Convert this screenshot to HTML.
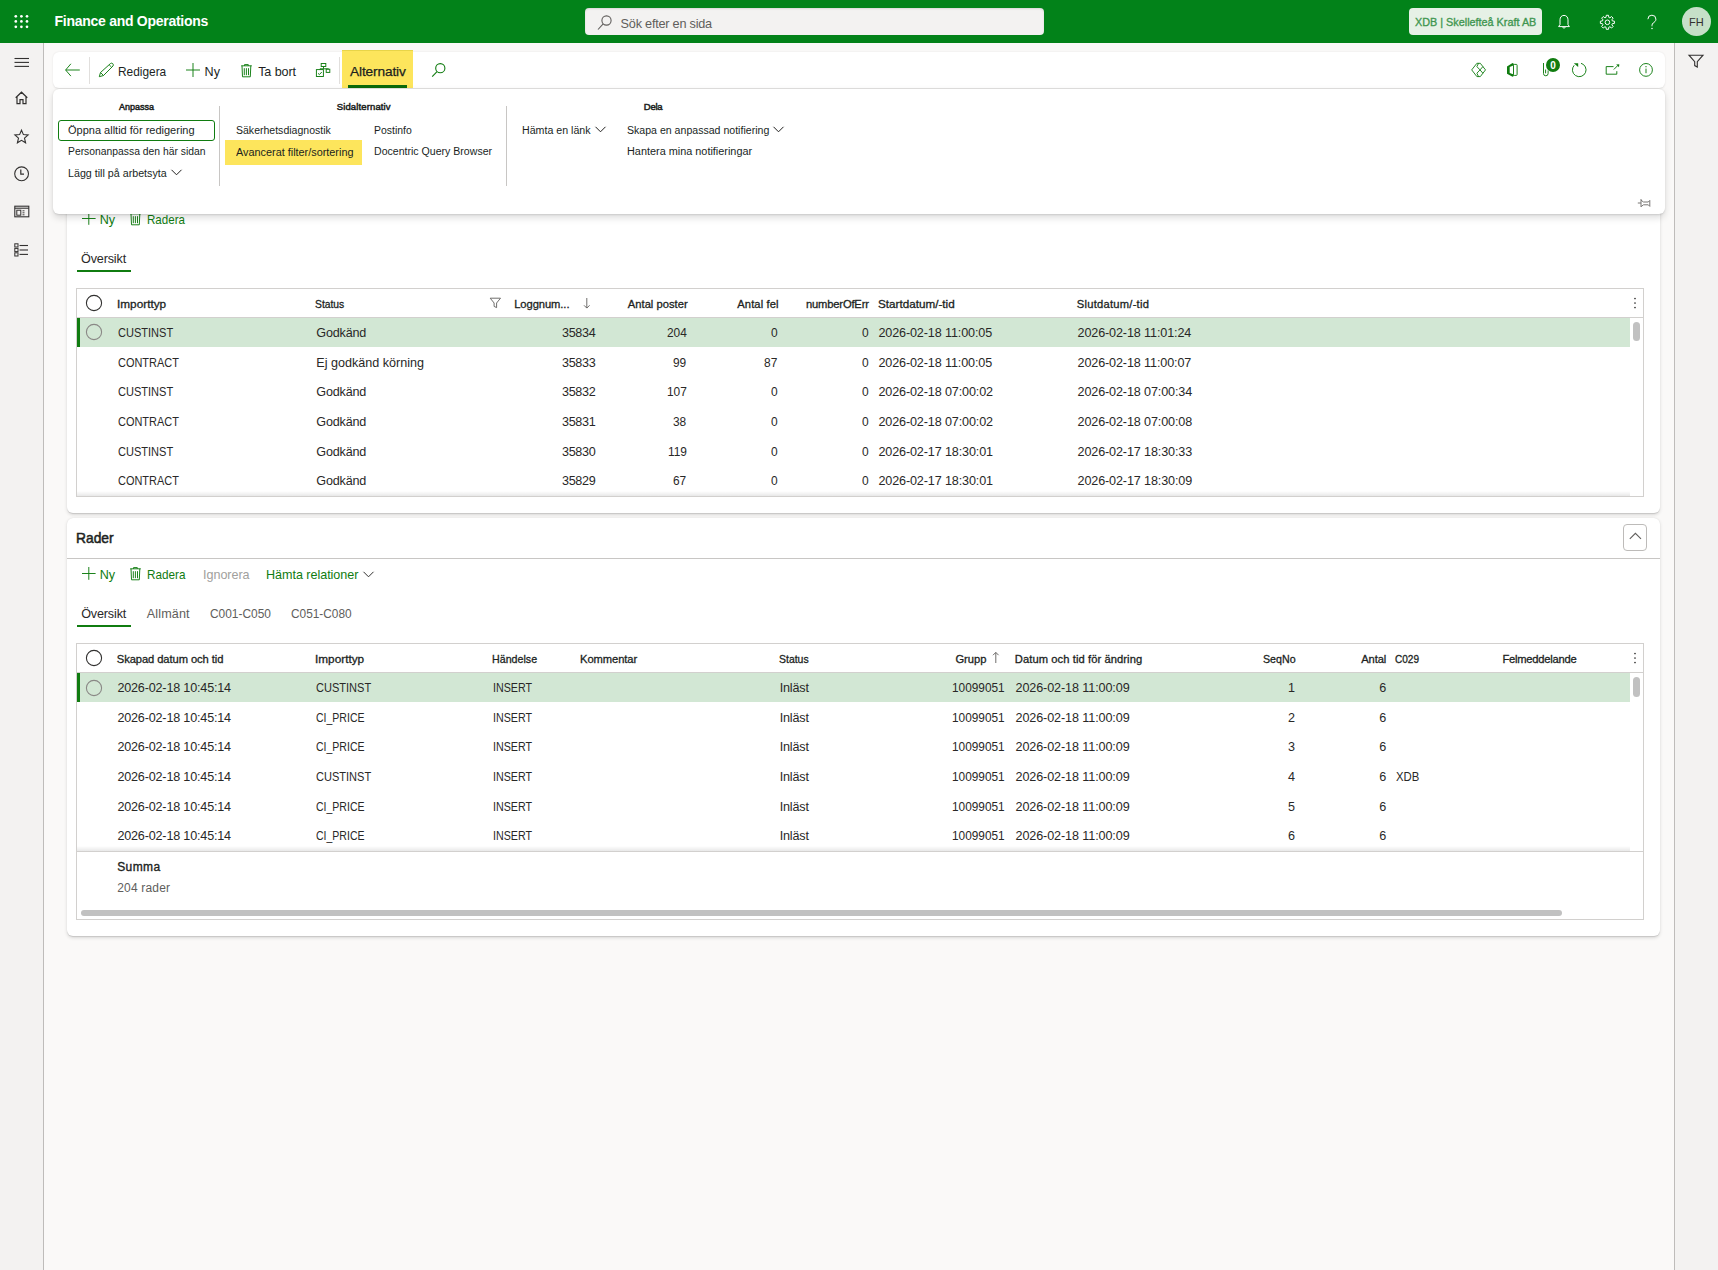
<!DOCTYPE html>
<html><head><meta charset="utf-8"><title>Finance and Operations</title>
<style>
html,body{margin:0;padding:0}
body{width:1718px;height:1270px;overflow:hidden;position:relative;font-family:"Liberation Sans",sans-serif;background:#faf9f8}
.t{position:absolute;white-space:nowrap;line-height:1;transform-origin:0 0}
svg{overflow:visible}
</style></head><body>
<div style="position:absolute;left:0px;top:0px;width:1718px;height:1270px;background:#faf9f8"></div>
<div style="position:absolute;left:0px;top:43px;width:43px;height:1227px;background:#f3f2f1"></div>
<div style="position:absolute;left:43px;top:43px;width:1px;height:1227px;background:#bebcba"></div>
<div style="position:absolute;left:1675px;top:43px;width:43px;height:1227px;background:#f3f2f1"></div>
<div style="position:absolute;left:1674px;top:43px;width:1px;height:1227px;background:#bebcba"></div>
<div style="position:absolute;left:0px;top:0px;width:1718px;height:43px;background:#028219"></div>
<svg style="position:absolute;left:0px;top:0px;" width="43" height="43" viewBox="0 0 43 43"><circle cx="15.8" cy="16.3" r="1.35" fill="#fff"/><circle cx="15.8" cy="21.4" r="1.35" fill="#fff"/><circle cx="15.8" cy="26.8" r="1.35" fill="#fff"/><circle cx="21.4" cy="16.3" r="1.35" fill="#fff"/><circle cx="21.4" cy="21.4" r="1.35" fill="#fff"/><circle cx="21.4" cy="26.8" r="1.35" fill="#fff"/><circle cx="27.0" cy="16.3" r="1.35" fill="#fff"/><circle cx="27.0" cy="21.4" r="1.35" fill="#fff"/><circle cx="27.0" cy="26.8" r="1.35" fill="#fff"/></svg>
<div class="t" style="left:54.60px;top:14px;font-size:14px;color:#ffffff;font-weight:700;letter-spacing:-0.279px;">Finance and Operations</div>
<div style="position:absolute;left:585px;top:8px;width:459px;height:26.5px;background:#f3f2f1;border-radius:4px;box-shadow:inset 0 1px 2px rgba(0,0,0,.12)"></div>
<svg style="position:absolute;left:596px;top:14px;" width="18" height="18" viewBox="0 0 18 18"><circle cx="10.5" cy="6.5" r="4.6" fill="none" stroke="#605e5c" stroke-width="1.1"/><line x1="7.2" y1="9.8" x2="2" y2="15.5" stroke="#605e5c" stroke-width="1.1"/></svg>
<div class="t" style="left:620.60px;top:18px;font-size:12.7px;color:#605e5c;letter-spacing:-0.228px;">Sök efter en sida</div>
<div style="position:absolute;left:1409px;top:8px;width:133px;height:26.7px;background:#e6f1e6;border-radius:4px"></div>
<div class="t" style="left:1414.80px;top:16px;font-size:11.6px;color:#3f9650;-webkit-text-stroke:0.35px #3f9650;transform:scaleX(0.9335);">XDB | Skellefteå Kraft AB</div>
<svg style="position:absolute;left:1600px;top:14.5px;" width="15" height="15" viewBox="0 0 15 15"><g transform="translate(7.4,7.3)" fill="none" stroke="#fff" stroke-width="1" stroke-linejoin="round"><polygon points="-1.41,-4.90 -1.11,-7.01 1.11,-7.01 1.41,-4.90 2.47,-4.46 4.17,-5.74 5.74,-4.17 4.46,-2.47 4.90,-1.41 7.01,-1.11 7.01,1.11 4.90,1.41 4.46,2.47 5.74,4.17 4.17,5.74 2.47,4.46 1.41,4.90 1.11,7.01 -1.11,7.01 -1.41,4.90 -2.47,4.46 -4.17,5.74 -5.74,4.17 -4.46,2.47 -4.90,1.41 -7.01,1.11 -7.01,-1.11 -4.90,-1.41 -4.46,-2.47 -5.74,-4.17 -4.17,-5.74 -2.47,-4.46"/><circle r="2.3"/></g></svg>
<svg style="position:absolute;left:1556.5px;top:14px;" width="14" height="16" viewBox="0 0 14 16"><path d="M7 1.4c-2.5 0-4 1.9-4 4.4v4.8L1.6 12.6h10.8L11 10.6V5.8C11 3.3 9.5 1.4 7 1.4z" fill="none" stroke="#fff" stroke-width="1" stroke-linejoin="round"/><path d="M5.6 13.1a1.5 1.5 0 0 0 2.8 0" fill="none" stroke="#fff" stroke-width="1"/></svg>
<svg style="position:absolute;left:1646px;top:14.5px;" width="12" height="16" viewBox="0 0 12 16"><path d="M1.9 4.2a4 4 0 0 1 8 0c0 2.1-1.5 2.8-2.7 3.8-.8.6-1.2 1.3-1.2 2.4v.9" fill="none" stroke="#fff" stroke-width="1"/><circle cx="6" cy="13.6" r="0.75" fill="#fff"/></svg>
<div style="position:absolute;left:1682px;top:7px;width:29px;height:29px;background:#c6e0c8;border-radius:50%"></div>
<div class="t" style="left:1689.00px;top:17px;font-size:11.8px;color:#323130;transform:scaleX(0.9333);">FH</div>
<svg style="position:absolute;left:14px;top:57px;" width="16" height="11" viewBox="0 0 16 11"><g stroke="#323130" stroke-width="1.1"><line x1="0.5" y1="1.5" x2="15" y2="1.5"/><line x1="0.5" y1="5.4" x2="15" y2="5.4"/><line x1="0.5" y1="9.4" x2="15" y2="9.4"/></g></svg>
<svg style="position:absolute;left:14px;top:91px;" width="15" height="14" viewBox="0 0 15 14"><path d="M1.7 6.8L7.5 1.2l5.8 5.6M3 5.7v7h3v-4h3v4h3v-7" fill="none" stroke="#323130" stroke-width="1.2" stroke-linejoin="miter"/></svg>
<svg style="position:absolute;left:14px;top:128.5px;" width="16" height="16" viewBox="0 0 16 16"><path d="M7.5 1.2l1.9 4.4 4.7.4-3.6 3.1 1.1 4.7-4.1-2.5-4.1 2.5 1.1-4.7L.9 6l4.7-.4z" fill="none" stroke="#323130" stroke-width="1.1" stroke-linejoin="miter"/></svg>
<svg style="position:absolute;left:13px;top:165px;" width="18" height="18" viewBox="0 0 18 18"><circle cx="8.6" cy="8.8" r="6.9" fill="none" stroke="#323130" stroke-width="1.1"/><path d="M7.8 4.6v4.6h3.2" fill="none" stroke="#323130" stroke-width="1.2"/></svg>
<svg style="position:absolute;left:13px;top:205px;" width="18" height="14" viewBox="0 0 18 14"><rect x="1.8" y="1.2" width="14" height="10.6" fill="none" stroke="#323130" stroke-width="1.1"/><line x1="1.8" y1="3.2" x2="15.8" y2="3.2" stroke="#323130" stroke-width="1.1"/><rect x="3.8" y="5.2" width="4" height="5" fill="none" stroke="#323130" stroke-width="1"/><g stroke="#323130" stroke-width="0.9"><line x1="9.5" y1="5.8" x2="11.5" y2="5.8"/><line x1="9.5" y1="7.8" x2="11.5" y2="7.8"/><line x1="9.5" y1="9.8" x2="11.5" y2="9.8"/></g></svg>
<svg style="position:absolute;left:13px;top:242px;" width="18" height="16" viewBox="0 0 18 16"><g fill="none" stroke="#323130" stroke-width="1"><rect x="1.8" y="1.8" width="3.2" height="3.2"/><rect x="1.8" y="6.4" width="3.2" height="3.2"/><rect x="1.8" y="10.8" width="3.2" height="3.2"/></g><g stroke="#323130" stroke-width="1.1"><line x1="6.5" y1="3.5" x2="15" y2="3.5"/><line x1="6.5" y1="8" x2="15" y2="8"/><line x1="6.5" y1="12.4" x2="15" y2="12.4"/></g></svg>
<svg style="position:absolute;left:1688px;top:54px;" width="16" height="14" viewBox="0 0 16 14"><path d="M1 1.2h14L9.3 7.6v5.4L6.7 11.6V7.6z" fill="none" stroke="#323130" stroke-width="1.1" stroke-linejoin="miter"/></svg>
<div style="position:absolute;left:67px;top:190px;width:1593px;height:323px;background:#fff;border-radius:6px;box-shadow:0 1.6px 3.6px rgba(0,0,0,.13),0 0.3px 0.9px rgba(0,0,0,.11)"></div>
<div style="position:absolute;left:67px;top:518px;width:1593px;height:418px;background:#fff;border-radius:6px;box-shadow:0 1.6px 3.6px rgba(0,0,0,.13),0 0.3px 0.9px rgba(0,0,0,.11)"></div>
<svg style="position:absolute;left:82px;top:211.9px;" width="15" height="15" viewBox="0 0 15 15"><g stroke="#107c10" stroke-width="0.95"><line x1="6.8" y1="0" x2="6.8" y2="12.8"/><line x1="0" y1="6.5" x2="13.6" y2="6.5"/></g></svg>
<div class="t" style="left:99.80px;top:214px;font-size:12.6px;color:#107c10;letter-spacing:-0.200px;">Ny</div>
<svg style="position:absolute;left:130px;top:212.1px;" width="12" height="14" viewBox="0 0 12 14"><g fill="none" stroke="#107c10" stroke-width="0.95"><path d="M0.2 1.8h10.6M3.5 1.8V0.6h3.8v1.2M1 1.8l0.5 11h7.8l0.5-11"/><path d="M3.3 4.2v7M5.4 4.2v7M7.5 4.2v7"/></g></svg>
<div class="t" style="left:147.00px;top:214px;font-size:12.6px;color:#107c10;transform:scaleX(0.9190);">Radera</div>
<div class="t" style="left:81.00px;top:253px;font-size:12.6px;color:#292827;letter-spacing:-0.143px;">Översikt</div>
<div style="position:absolute;left:77px;top:270px;width:54px;height:2px;background:#107c10"></div>
<div style="position:absolute;left:76px;top:288px;width:1568px;height:209px;border:1px solid #d2d0ce;box-sizing:border-box"></div>
<div style="position:absolute;left:77px;top:317px;width:1566px;height:1px;background:#d2d0ce"></div>
<div style="position:absolute;left:77px;top:318px;width:1553px;height:29px;background:#d2e7d4"></div>
<div style="position:absolute;left:77px;top:318px;width:3px;height:29px;background:#107c10"></div>
<div style="position:absolute;left:1633px;top:322px;width:7px;height:18.5px;background:#c1c1c1;border-radius:4px"></div>
<div style="position:absolute;left:77px;top:491px;width:1553px;height:5px;background:linear-gradient(rgba(0,0,0,0),rgba(0,0,0,.09))"></div>
<svg style="position:absolute;left:85px;top:294px;" width="18" height="18" viewBox="0 0 18 18"><circle cx="9" cy="9" r="7.6" fill="none" stroke="#323130" stroke-width="1.1"/></svg>
<div class="t" style="left:116.90px;top:299px;font-size:11.2px;color:#201f1e;-webkit-text-stroke:0.3px #201f1e;transform:scaleX(1.0535);">Importtyp</div>
<div class="t" style="left:315.40px;top:299px;font-size:11.2px;color:#201f1e;-webkit-text-stroke:0.3px #201f1e;transform:scaleX(0.9228);">Status</div>
<svg style="position:absolute;left:489px;top:297px;" width="13" height="12" viewBox="0 0 13 12"><path d="M1.2 1.2h10.3L7.6 6v4.6L5.1 9.4V6z" fill="none" stroke="#605e5c" stroke-width="0.9"/></svg>
<div class="t" style="left:514.20px;top:299px;font-size:11.2px;color:#201f1e;-webkit-text-stroke:0.3px #201f1e;letter-spacing:-0.072px;">Loggnum...</div>
<svg style="position:absolute;left:583px;top:297px;" width="8" height="13" viewBox="0 0 8 13"><g fill="none" stroke="#605e5c" stroke-width="0.9"><line x1="3.8" y1="1" x2="3.8" y2="11"/><path d="M1 8.3l2.8 2.8 2.8-2.8"/></g></svg>
<div class="t" style="left:627.80px;top:299px;font-size:11.2px;color:#201f1e;-webkit-text-stroke:0.3px #201f1e;letter-spacing:0.014px;">Antal poster</div>
<div class="t" style="left:737.30px;top:299px;font-size:11.2px;color:#201f1e;-webkit-text-stroke:0.3px #201f1e;letter-spacing:0.094px;">Antal fel</div>
<div class="t" style="left:806.00px;top:299px;font-size:11.2px;color:#201f1e;-webkit-text-stroke:0.3px #201f1e;letter-spacing:-0.175px;">numberOfErr</div>
<div class="t" style="left:877.70px;top:299px;font-size:11.2px;color:#201f1e;-webkit-text-stroke:0.3px #201f1e;transform:scaleX(1.0456);">Startdatum/-tid</div>
<div class="t" style="left:1076.80px;top:299px;font-size:11.2px;color:#201f1e;-webkit-text-stroke:0.3px #201f1e;letter-spacing:0.238px;">Slutdatum/-tid</div>
<svg style="position:absolute;left:1632px;top:295px;" width="6" height="16" viewBox="0 0 6 16"><g fill="#323130"><circle cx="3" cy="3.5" r="0.85"/><circle cx="3" cy="8" r="0.85"/><circle cx="3" cy="12.5" r="0.85"/></g></svg>
<svg style="position:absolute;left:85px;top:323.4px;" width="18" height="18" viewBox="0 0 18 18"><circle cx="9" cy="9" r="7.6" fill="none" stroke="#8a8886" stroke-width="1.1"/></svg>
<div class="t" style="left:117.70px;top:327px;font-size:12.6px;color:#292827;transform:scaleX(0.8760);">CUSTINST</div>
<div class="t" style="left:316.30px;top:327px;font-size:12.6px;color:#292827;letter-spacing:-0.175px;">Godkänd</div>
<div class="t" style="left:562.02px;top:327px;font-size:12.6px;color:#292827;letter-spacing:-0.342px;">35834</div>
<div class="t" style="left:666.65px;top:327px;font-size:12.6px;color:#292827;transform:scaleX(0.9450);">204</div>
<div class="t" style="left:770.75px;top:327px;font-size:12.6px;color:#292827;transform:scaleX(0.9500);">0</div>
<div class="t" style="left:861.55px;top:327px;font-size:12.6px;color:#292827;transform:scaleX(0.9500);">0</div>
<div class="t" style="left:878.40px;top:327px;font-size:12.6px;color:#292827;letter-spacing:-0.122px;">2026-02-18 11:00:05</div>
<div class="t" style="left:1077.50px;top:327px;font-size:12.6px;color:#292827;letter-spacing:-0.122px;">2026-02-18 11:01:24</div>
<div class="t" style="left:117.70px;top:357px;font-size:12.6px;color:#292827;transform:scaleX(0.8700);">CONTRACT</div>
<div class="t" style="left:316.30px;top:357px;font-size:12.6px;color:#292827;letter-spacing:-0.006px;">Ej godkänd körning</div>
<div class="t" style="left:562.02px;top:357px;font-size:12.6px;color:#292827;letter-spacing:-0.342px;">35833</div>
<div class="t" style="left:673.27px;top:357px;font-size:12.6px;color:#292827;transform:scaleX(0.9450);">99</div>
<div class="t" style="left:764.10px;top:357px;font-size:12.6px;color:#292827;transform:scaleX(0.9500);">87</div>
<div class="t" style="left:861.55px;top:357px;font-size:12.6px;color:#292827;transform:scaleX(0.9500);">0</div>
<div class="t" style="left:878.40px;top:357px;font-size:12.6px;color:#292827;letter-spacing:-0.122px;">2026-02-18 11:00:05</div>
<div class="t" style="left:1077.50px;top:357px;font-size:12.6px;color:#292827;letter-spacing:-0.122px;">2026-02-18 11:00:07</div>
<div class="t" style="left:117.70px;top:386px;font-size:12.6px;color:#292827;transform:scaleX(0.8760);">CUSTINST</div>
<div class="t" style="left:316.30px;top:386px;font-size:12.6px;color:#292827;letter-spacing:-0.175px;">Godkänd</div>
<div class="t" style="left:562.02px;top:386px;font-size:12.6px;color:#292827;letter-spacing:-0.342px;">35832</div>
<div class="t" style="left:666.65px;top:386px;font-size:12.6px;color:#292827;transform:scaleX(0.9450);">107</div>
<div class="t" style="left:770.75px;top:386px;font-size:12.6px;color:#292827;transform:scaleX(0.9500);">0</div>
<div class="t" style="left:861.55px;top:386px;font-size:12.6px;color:#292827;transform:scaleX(0.9500);">0</div>
<div class="t" style="left:878.40px;top:386px;font-size:12.6px;color:#292827;letter-spacing:-0.123px;">2026-02-18 07:00:02</div>
<div class="t" style="left:1077.50px;top:386px;font-size:12.6px;color:#292827;letter-spacing:-0.123px;">2026-02-18 07:00:34</div>
<div class="t" style="left:117.70px;top:416px;font-size:12.6px;color:#292827;transform:scaleX(0.8700);">CONTRACT</div>
<div class="t" style="left:316.30px;top:416px;font-size:12.6px;color:#292827;letter-spacing:-0.175px;">Godkänd</div>
<div class="t" style="left:562.02px;top:416px;font-size:12.6px;color:#292827;letter-spacing:-0.342px;">35831</div>
<div class="t" style="left:673.27px;top:416px;font-size:12.6px;color:#292827;transform:scaleX(0.9450);">38</div>
<div class="t" style="left:770.75px;top:416px;font-size:12.6px;color:#292827;transform:scaleX(0.9500);">0</div>
<div class="t" style="left:861.55px;top:416px;font-size:12.6px;color:#292827;transform:scaleX(0.9500);">0</div>
<div class="t" style="left:878.40px;top:416px;font-size:12.6px;color:#292827;letter-spacing:-0.123px;">2026-02-18 07:00:02</div>
<div class="t" style="left:1077.50px;top:416px;font-size:12.6px;color:#292827;letter-spacing:-0.123px;">2026-02-18 07:00:08</div>
<div class="t" style="left:117.70px;top:446px;font-size:12.6px;color:#292827;transform:scaleX(0.8760);">CUSTINST</div>
<div class="t" style="left:316.30px;top:446px;font-size:12.6px;color:#292827;letter-spacing:-0.175px;">Godkänd</div>
<div class="t" style="left:562.02px;top:446px;font-size:12.6px;color:#292827;letter-spacing:-0.342px;">35830</div>
<div class="t" style="left:667.51px;top:446px;font-size:12.6px;color:#292827;transform:scaleX(0.9450);">119</div>
<div class="t" style="left:770.75px;top:446px;font-size:12.6px;color:#292827;transform:scaleX(0.9500);">0</div>
<div class="t" style="left:861.55px;top:446px;font-size:12.6px;color:#292827;transform:scaleX(0.9500);">0</div>
<div class="t" style="left:878.40px;top:446px;font-size:12.6px;color:#292827;letter-spacing:-0.123px;">2026-02-17 18:30:01</div>
<div class="t" style="left:1077.50px;top:446px;font-size:12.6px;color:#292827;letter-spacing:-0.123px;">2026-02-17 18:30:33</div>
<div class="t" style="left:117.70px;top:475px;font-size:12.6px;color:#292827;transform:scaleX(0.8700);">CONTRACT</div>
<div class="t" style="left:316.30px;top:475px;font-size:12.6px;color:#292827;letter-spacing:-0.175px;">Godkänd</div>
<div class="t" style="left:562.02px;top:475px;font-size:12.6px;color:#292827;letter-spacing:-0.342px;">35829</div>
<div class="t" style="left:673.27px;top:475px;font-size:12.6px;color:#292827;transform:scaleX(0.9450);">67</div>
<div class="t" style="left:770.75px;top:475px;font-size:12.6px;color:#292827;transform:scaleX(0.9500);">0</div>
<div class="t" style="left:861.55px;top:475px;font-size:12.6px;color:#292827;transform:scaleX(0.9500);">0</div>
<div class="t" style="left:878.40px;top:475px;font-size:12.6px;color:#292827;letter-spacing:-0.123px;">2026-02-17 18:30:01</div>
<div class="t" style="left:1077.50px;top:475px;font-size:12.6px;color:#292827;letter-spacing:-0.123px;">2026-02-17 18:30:09</div>
<div class="t" style="left:76.00px;top:531px;font-size:14.5px;color:#201f1e;-webkit-text-stroke:0.5px #201f1e;transform:scaleX(0.9519);">Rader</div>
<div style="position:absolute;left:1623.3px;top:524.2px;width:23.6px;height:26.5px;border:1px solid #bdbbb9;border-radius:4px;box-sizing:border-box"></div>
<svg style="position:absolute;left:1628px;top:531px;" width="15" height="10" viewBox="0 0 15 10"><path d="M1.8 7.8l5.6-5.5 5.6 5.5" fill="none" stroke="#605e5c" stroke-width="1.1"/></svg>
<div style="position:absolute;left:67px;top:558px;width:1593px;height:1px;background:#c8c6c4"></div>
<svg style="position:absolute;left:82px;top:567px;" width="15" height="15" viewBox="0 0 15 15"><g stroke="#107c10" stroke-width="0.95"><line x1="6.8" y1="0" x2="6.8" y2="12.8"/><line x1="0" y1="6.5" x2="13.6" y2="6.5"/></g></svg>
<div class="t" style="left:99.80px;top:569px;font-size:12.6px;color:#107c10;letter-spacing:-0.200px;">Ny</div>
<svg style="position:absolute;left:130px;top:566.6px;" width="12" height="14" viewBox="0 0 12 14"><g fill="none" stroke="#107c10" stroke-width="0.95"><path d="M0.2 1.8h10.6M3.5 1.8V0.6h3.8v1.2M1 1.8l0.5 11h7.8l0.5-11"/><path d="M3.3 4.2v7M5.4 4.2v7M7.5 4.2v7"/></g></svg>
<div class="t" style="left:146.50px;top:569px;font-size:12.6px;color:#107c10;transform:scaleX(0.9311);">Radera</div>
<div class="t" style="left:203.10px;top:569px;font-size:12.6px;color:#a19f9d;letter-spacing:-0.064px;">Ignorera</div>
<div class="t" style="left:266.00px;top:569px;font-size:12.6px;color:#107c10;letter-spacing:-0.043px;">Hämta relationer</div>
<svg style="position:absolute;left:362px;top:569.5px;" width="14" height="9" viewBox="0 0 14 9"><path d="M1.5 1.8l5 5 5-5" fill="none" stroke="#323130" stroke-width="1"/></svg>
<div class="t" style="left:81.20px;top:608px;font-size:12.6px;color:#292827;letter-spacing:-0.157px;">Översikt</div>
<div class="t" style="left:146.70px;top:608px;font-size:12.6px;color:#605e5c;letter-spacing:0.150px;">Allmänt</div>
<div class="t" style="left:209.80px;top:608px;font-size:12.6px;color:#605e5c;transform:scaleX(0.9465);">C001-C050</div>
<div class="t" style="left:291.20px;top:608px;font-size:12.6px;color:#605e5c;transform:scaleX(0.9418);">C051-C080</div>
<div style="position:absolute;left:77px;top:625px;width:54px;height:2px;background:#107c10"></div>
<div style="position:absolute;left:76px;top:643px;width:1568px;height:277px;border:1px solid #d2d0ce;box-sizing:border-box"></div>
<div style="position:absolute;left:77px;top:672px;width:1566px;height:1px;background:#d2d0ce"></div>
<div style="position:absolute;left:77px;top:673px;width:1553px;height:29px;background:#d2e7d4"></div>
<div style="position:absolute;left:77px;top:673px;width:3px;height:29px;background:#107c10"></div>
<div style="position:absolute;left:1633px;top:677px;width:7px;height:19.5px;background:#c1c1c1;border-radius:4px"></div>
<div style="position:absolute;left:77px;top:846px;width:1553px;height:5px;background:linear-gradient(rgba(0,0,0,0),rgba(0,0,0,.09))"></div>
<div style="position:absolute;left:77px;top:851px;width:1566px;height:1px;background:#d2d0ce"></div>
<div style="position:absolute;left:80.7px;top:910px;width:1481px;height:6px;background:#c1c1c1;border-radius:3px"></div>
<svg style="position:absolute;left:84.6px;top:649px;" width="18" height="18" viewBox="0 0 18 18"><circle cx="9" cy="9" r="7.6" fill="none" stroke="#323130" stroke-width="1.1"/></svg>
<div class="t" style="left:116.80px;top:654px;font-size:11.2px;color:#201f1e;-webkit-text-stroke:0.3px #201f1e;letter-spacing:-0.087px;">Skapad datum och tid</div>
<div class="t" style="left:315.20px;top:654px;font-size:11.2px;color:#201f1e;-webkit-text-stroke:0.3px #201f1e;transform:scaleX(1.0535);">Importtyp</div>
<div class="t" style="left:491.60px;top:654px;font-size:11.2px;color:#201f1e;-webkit-text-stroke:0.3px #201f1e;transform:scaleX(0.9535);">Händelse</div>
<div class="t" style="left:580.00px;top:654px;font-size:11.2px;color:#201f1e;-webkit-text-stroke:0.3px #201f1e;letter-spacing:-0.075px;">Kommentar</div>
<div class="t" style="left:778.70px;top:654px;font-size:11.2px;color:#201f1e;-webkit-text-stroke:0.3px #201f1e;transform:scaleX(0.9354);">Status</div>
<div class="t" style="left:955.40px;top:654px;font-size:11.2px;color:#201f1e;-webkit-text-stroke:0.3px #201f1e;letter-spacing:-0.012px;">Grupp</div>
<svg style="position:absolute;left:992px;top:651px;" width="8" height="13" viewBox="0 0 8 13"><g fill="none" stroke="#605e5c" stroke-width="0.9"><line x1="3.8" y1="1.5" x2="3.8" y2="12"/><path d="M1 4.2l2.8-2.8 2.8 2.8"/></g></svg>
<div class="t" style="left:1014.80px;top:654px;font-size:11.2px;color:#201f1e;-webkit-text-stroke:0.3px #201f1e;letter-spacing:0.073px;">Datum och tid för ändring</div>
<div class="t" style="left:1263.30px;top:654px;font-size:11.2px;color:#201f1e;-webkit-text-stroke:0.3px #201f1e;transform:scaleX(0.9518);">SeqNo</div>
<div class="t" style="left:1361.30px;top:654px;font-size:11.2px;color:#201f1e;-webkit-text-stroke:0.3px #201f1e;letter-spacing:-0.138px;">Antal</div>
<div class="t" style="left:1395.40px;top:654px;font-size:11.2px;color:#201f1e;-webkit-text-stroke:0.3px #201f1e;transform:scaleX(0.8993);">C029</div>
<div class="t" style="left:1502.40px;top:654px;font-size:11.2px;color:#201f1e;-webkit-text-stroke:0.3px #201f1e;letter-spacing:-0.233px;">Felmeddelande</div>
<svg style="position:absolute;left:1632px;top:650px;" width="6" height="16" viewBox="0 0 6 16"><g fill="#323130"><circle cx="3" cy="3.5" r="0.85"/><circle cx="3" cy="8" r="0.85"/><circle cx="3" cy="12.5" r="0.85"/></g></svg>
<svg style="position:absolute;left:84.6px;top:678.6px;" width="18" height="18" viewBox="0 0 18 18"><circle cx="9" cy="9" r="7.6" fill="none" stroke="#8a8886" stroke-width="1.1"/></svg>
<div class="t" style="left:117.40px;top:682px;font-size:12.6px;color:#292827;letter-spacing:-0.178px;">2026-02-18 10:45:14</div>
<div class="t" style="left:316.00px;top:682px;font-size:12.6px;color:#292827;transform:scaleX(0.8762);">CUSTINST</div>
<div class="t" style="left:492.70px;top:682px;font-size:12.6px;color:#292827;transform:scaleX(0.8500);">INSERT</div>
<div class="t" style="left:779.70px;top:682px;font-size:12.6px;color:#292827;letter-spacing:-0.160px;">Inläst</div>
<div class="t" style="left:951.60px;top:682px;font-size:12.6px;color:#292827;transform:scaleX(0.9402);">10099051</div>
<div class="t" style="left:1015.50px;top:682px;font-size:12.6px;color:#292827;letter-spacing:-0.103px;">2026-02-18 11:00:09</div>
<div class="t" style="left:1288.00px;top:682px;font-size:12.6px;color:#292827;">1</div>
<div class="t" style="left:1379.30px;top:682px;font-size:12.6px;color:#292827;">6</div>
<div class="t" style="left:117.40px;top:712px;font-size:12.6px;color:#292827;letter-spacing:-0.178px;">2026-02-18 10:45:14</div>
<div class="t" style="left:316.00px;top:712px;font-size:12.6px;color:#292827;transform:scaleX(0.8348);">CI_PRICE</div>
<div class="t" style="left:492.70px;top:712px;font-size:12.6px;color:#292827;transform:scaleX(0.8500);">INSERT</div>
<div class="t" style="left:779.70px;top:712px;font-size:12.6px;color:#292827;letter-spacing:-0.160px;">Inläst</div>
<div class="t" style="left:951.60px;top:712px;font-size:12.6px;color:#292827;transform:scaleX(0.9402);">10099051</div>
<div class="t" style="left:1015.50px;top:712px;font-size:12.6px;color:#292827;letter-spacing:-0.103px;">2026-02-18 11:00:09</div>
<div class="t" style="left:1288.00px;top:712px;font-size:12.6px;color:#292827;">2</div>
<div class="t" style="left:1379.30px;top:712px;font-size:12.6px;color:#292827;">6</div>
<div class="t" style="left:117.40px;top:741px;font-size:12.6px;color:#292827;letter-spacing:-0.178px;">2026-02-18 10:45:14</div>
<div class="t" style="left:316.00px;top:741px;font-size:12.6px;color:#292827;transform:scaleX(0.8348);">CI_PRICE</div>
<div class="t" style="left:492.70px;top:741px;font-size:12.6px;color:#292827;transform:scaleX(0.8500);">INSERT</div>
<div class="t" style="left:779.70px;top:741px;font-size:12.6px;color:#292827;letter-spacing:-0.160px;">Inläst</div>
<div class="t" style="left:951.60px;top:741px;font-size:12.6px;color:#292827;transform:scaleX(0.9402);">10099051</div>
<div class="t" style="left:1015.50px;top:741px;font-size:12.6px;color:#292827;letter-spacing:-0.103px;">2026-02-18 11:00:09</div>
<div class="t" style="left:1288.00px;top:741px;font-size:12.6px;color:#292827;">3</div>
<div class="t" style="left:1379.30px;top:741px;font-size:12.6px;color:#292827;">6</div>
<div class="t" style="left:117.40px;top:771px;font-size:12.6px;color:#292827;letter-spacing:-0.178px;">2026-02-18 10:45:14</div>
<div class="t" style="left:316.00px;top:771px;font-size:12.6px;color:#292827;transform:scaleX(0.8762);">CUSTINST</div>
<div class="t" style="left:492.70px;top:771px;font-size:12.6px;color:#292827;transform:scaleX(0.8500);">INSERT</div>
<div class="t" style="left:779.70px;top:771px;font-size:12.6px;color:#292827;letter-spacing:-0.160px;">Inläst</div>
<div class="t" style="left:951.60px;top:771px;font-size:12.6px;color:#292827;transform:scaleX(0.9402);">10099051</div>
<div class="t" style="left:1015.50px;top:771px;font-size:12.6px;color:#292827;letter-spacing:-0.103px;">2026-02-18 11:00:09</div>
<div class="t" style="left:1288.00px;top:771px;font-size:12.6px;color:#292827;">4</div>
<div class="t" style="left:1379.30px;top:771px;font-size:12.6px;color:#292827;">6</div>
<div class="t" style="left:1396.00px;top:771px;font-size:12.6px;color:#292827;transform:scaleX(0.9000);">XDB</div>
<div class="t" style="left:117.40px;top:801px;font-size:12.6px;color:#292827;letter-spacing:-0.178px;">2026-02-18 10:45:14</div>
<div class="t" style="left:316.00px;top:801px;font-size:12.6px;color:#292827;transform:scaleX(0.8348);">CI_PRICE</div>
<div class="t" style="left:492.70px;top:801px;font-size:12.6px;color:#292827;transform:scaleX(0.8500);">INSERT</div>
<div class="t" style="left:779.70px;top:801px;font-size:12.6px;color:#292827;letter-spacing:-0.160px;">Inläst</div>
<div class="t" style="left:951.60px;top:801px;font-size:12.6px;color:#292827;transform:scaleX(0.9402);">10099051</div>
<div class="t" style="left:1015.50px;top:801px;font-size:12.6px;color:#292827;letter-spacing:-0.103px;">2026-02-18 11:00:09</div>
<div class="t" style="left:1288.00px;top:801px;font-size:12.6px;color:#292827;">5</div>
<div class="t" style="left:1379.30px;top:801px;font-size:12.6px;color:#292827;">6</div>
<div class="t" style="left:117.40px;top:830px;font-size:12.6px;color:#292827;letter-spacing:-0.178px;">2026-02-18 10:45:14</div>
<div class="t" style="left:316.00px;top:830px;font-size:12.6px;color:#292827;transform:scaleX(0.8348);">CI_PRICE</div>
<div class="t" style="left:492.70px;top:830px;font-size:12.6px;color:#292827;transform:scaleX(0.8500);">INSERT</div>
<div class="t" style="left:779.70px;top:830px;font-size:12.6px;color:#292827;letter-spacing:-0.160px;">Inläst</div>
<div class="t" style="left:951.60px;top:830px;font-size:12.6px;color:#292827;transform:scaleX(0.9402);">10099051</div>
<div class="t" style="left:1015.50px;top:830px;font-size:12.6px;color:#292827;letter-spacing:-0.103px;">2026-02-18 11:00:09</div>
<div class="t" style="left:1288.00px;top:830px;font-size:12.6px;color:#292827;">6</div>
<div class="t" style="left:1379.30px;top:830px;font-size:12.6px;color:#292827;">6</div>
<div class="t" style="left:117.20px;top:861px;font-size:12.0px;color:#201f1e;-webkit-text-stroke:0.35px #201f1e;letter-spacing:0.412px;">Summa</div>
<div class="t" style="left:117.20px;top:882px;font-size:12.0px;color:#605e5c;letter-spacing:0.181px;">204 rader</div>
<div style="position:absolute;left:53px;top:52px;width:1612px;height:35.5px;background:#fff;border-radius:6px;box-shadow:0 0.6px 1.8px rgba(0,0,0,.10)"></div>
<svg style="position:absolute;left:64px;top:62px;" width="17" height="16" viewBox="0 0 17 16"><path d="M6.9 1.8L1.6 8l5.3 6.1M1.8 8h14" fill="none" stroke="#107c10" stroke-width="0.95"/></svg>
<div style="position:absolute;left:89px;top:56.5px;width:1px;height:27px;background:#e1dfdd"></div>
<svg style="position:absolute;left:98px;top:62px;" width="16" height="16" viewBox="0 0 16 16"><path d="M12.5 1.5a1.8 1.8 0 0 1 2.5 2.5L5.5 13.5 1.3 14.7l1.2-4.2z M11.2 2.8l2.4 2.4 M2.5 10.5l3 3" fill="none" stroke="#107c10" stroke-width="0.95" stroke-linejoin="round"/></svg>
<div class="t" style="left:117.80px;top:66px;font-size:12.6px;color:#201f1e;transform:scaleX(0.9434);">Redigera</div>
<svg style="position:absolute;left:186px;top:62.9px;" width="15" height="15" viewBox="0 0 15 15"><g stroke="#107c10" stroke-width="0.95"><line x1="7" y1="0" x2="7" y2="14"/><line x1="0" y1="7" x2="14" y2="7"/></g></svg>
<div class="t" style="left:204.50px;top:66px;font-size:12.6px;color:#201f1e;letter-spacing:0.200px;">Ny</div>
<svg style="position:absolute;left:240.6px;top:63.7px;" width="12" height="14" viewBox="0 0 12 14"><g fill="none" stroke="#107c10" stroke-width="0.95"><path d="M0.2 1.8h10.6M3.5 1.8V0.6h3.8v1.2M1 1.8l0.5 11h7.8l0.5-11"/><path d="M3.3 4.2v7M5.4 4.2v7M7.5 4.2v7"/></g></svg>
<div class="t" style="left:258.20px;top:66px;font-size:12.6px;color:#201f1e;letter-spacing:-0.117px;">Ta bort</div>
<svg style="position:absolute;left:315px;top:62px;" width="16" height="16" viewBox="0 0 16 16"><g fill="none" stroke="#107c10" stroke-width="0.95"><rect x="6.2" y="1.5" width="4.6" height="3"/><path d="M8.5 4.5v2.3M5 6.8h8.5M5 6.8v0.8M13.5 6.8v0.4"/><rect x="1.4" y="7.6" width="7" height="6.9"/><rect x="11.2" y="7.2" width="3.6" height="3.2"/><path d="M3 11.3l1.4 1.3 2.4-2.6"/></g></svg>
<div style="position:absolute;left:339px;top:56.5px;width:1px;height:27px;background:#e1dfdd"></div>
<div style="position:absolute;left:342px;top:50.3px;width:71px;height:37.7px;background:#fde55c;border-top:1.6px solid #e8d448;box-sizing:border-box"></div>
<div class="t" style="left:350.00px;top:65px;font-size:13.7px;color:#201f1e;letter-spacing:-0.133px;-webkit-text-stroke:0.25px #201f1e;">Alternativ</div>
<div style="position:absolute;left:348px;top:85px;width:59px;height:3px;background:#0b6a0b"></div>
<svg style="position:absolute;left:430px;top:62px;" width="17" height="16" viewBox="0 0 17 16"><circle cx="10.3" cy="6.2" r="4.6" fill="none" stroke="#107c10" stroke-width="1.1"/><line x1="7" y1="9.6" x2="2.2" y2="14.6" stroke="#107c10" stroke-width="1.1"/></svg>
<svg style="position:absolute;left:1469px;top:60px;" width="20" height="20" viewBox="0 0 20 20"><g fill="none" stroke="#107c10" stroke-width="0.9" stroke-linejoin="miter"><path d="M2.7 9.9L7.9 3.3H11.3L16.5 9.9L11.3 16.6H7.9Z"/><path d="M9.5 3.3L7.9 6.6L11 9.9L7.9 13.2L9.5 16.6M13.9 6.6L11 9.9L13.9 13.2"/></g></svg>
<svg style="position:absolute;left:1502px;top:60px;" width="20" height="20" viewBox="0 0 20 20"><path d="M5 6.4L10.5 3.1L11.8 3.7V5.3L7.7 6.9V12.9L11.8 14.5V16.1L10.5 16.8L5 13.7Z" fill="#107c10"/><rect x="11.5" y="4.4" width="3.6" height="11" rx="0.8" fill="none" stroke="#107c10" stroke-width="0.95"/></svg>
<svg style="position:absolute;left:1541px;top:61px;" width="10" height="18" viewBox="0 0 10 18"><path d="M2.5 2v10.5a2.3 2.3 0 0 0 4.6 0V9.5M4.6 8.5v3.8" fill="none" stroke="#107c10" stroke-width="0.95"/></svg>
<div style="position:absolute;left:1545.6px;top:58.1px;width:14.4px;height:14.4px;background:#107c10;border-radius:50%"></div>
<div class="t" style="left:1550.30px;top:61px;font-size:10px;color:#ffffff;font-weight:700;">0</div>
<svg style="position:absolute;left:1570px;top:61px;" width="18" height="18" viewBox="0 0 18 18"><path d="M11 2.3A6.8 6.8 0 1 1 4.2 4.3" fill="none" stroke="#107c10" stroke-width="0.95"/><path d="M3.8 2.2h4.4v3.8z" fill="#107c10"/></svg>
<svg style="position:absolute;left:1604px;top:63px;" width="18" height="13" viewBox="0 0 18 13"><path d="M9.5 3.6H2.2v7.6h10.6V8.2" fill="none" stroke="#107c10" stroke-width="0.95"/><path d="M9.8 6.5l4.2-4.2" stroke="#107c10" stroke-width="0.95"/><path d="M15.3 1.2l-0.3 3.1-2.8-2.8z" fill="#107c10"/></svg>
<svg style="position:absolute;left:1638px;top:61.5px;" width="16" height="16" viewBox="0 0 16 16"><circle cx="8" cy="7.9" r="6.4" fill="none" stroke="#107c10" stroke-width="0.95"/><line x1="8" y1="6.6" x2="8" y2="11.2" stroke="#107c10" stroke-width="0.95"/><circle cx="8" cy="4.7" r="0.65" fill="#107c10"/></svg>
<div style="position:absolute;left:53px;top:89px;width:1612px;height:125px;background:#fff;border-radius:6px;box-shadow:0 3.2px 7.2px rgba(0,0,0,.13),0 0.6px 1.8px rgba(0,0,0,.11)"></div>
<div class="t" style="left:119.00px;top:102px;font-size:9.5px;color:#201f1e;-webkit-text-stroke:0.5px #201f1e;transform:scaleX(0.9459);">Anpassa</div>
<div class="t" style="left:336.70px;top:102px;font-size:9.5px;color:#201f1e;-webkit-text-stroke:0.5px #201f1e;letter-spacing:0.133px;">Sidalternativ</div>
<div class="t" style="left:643.80px;top:102px;font-size:9.5px;color:#201f1e;-webkit-text-stroke:0.5px #201f1e;letter-spacing:-0.250px;">Dela</div>
<div style="position:absolute;left:219px;top:106px;width:1px;height:80px;background:#c8c6c4"></div>
<div style="position:absolute;left:506px;top:106px;width:1px;height:80px;background:#c8c6c4"></div>
<div style="position:absolute;left:58px;top:120px;width:157px;height:21px;border:1.5px solid #107c10;border-radius:3px;box-sizing:border-box"></div>
<div class="t" style="left:67.50px;top:124px;font-size:11.7px;color:#201f1e;transform:scaleX(0.9410);">Öppna alltid för redigering</div>
<div class="t" style="left:67.50px;top:145px;font-size:11.7px;color:#201f1e;transform:scaleX(0.8852);">Personanpassa den här sidan</div>
<div class="t" style="left:67.50px;top:167px;font-size:11.7px;color:#201f1e;transform:scaleX(0.9148);">Lägg till på arbetsyta</div>
<svg style="position:absolute;left:170px;top:168px;" width="14" height="9" viewBox="0 0 14 9"><path d="M1.5 1.8l5 5 5-5" fill="none" stroke="#201f1e" stroke-width="1"/></svg>
<div style="position:absolute;left:225px;top:140px;width:137px;height:24.7px;background:#fde55c"></div>
<div class="t" style="left:235.50px;top:124px;font-size:11.7px;color:#201f1e;transform:scaleX(0.9004);">Säkerhetsdiagnostik</div>
<div class="t" style="left:235.50px;top:146px;font-size:11.7px;color:#201f1e;transform:scaleX(0.9289);">Avancerat filter/sortering</div>
<div class="t" style="left:374.20px;top:124px;font-size:11.7px;color:#201f1e;transform:scaleX(0.8936);">Postinfo</div>
<div class="t" style="left:374.20px;top:145px;font-size:11.7px;color:#201f1e;transform:scaleX(0.9044);">Docentric Query Browser</div>
<div class="t" style="left:522.30px;top:124px;font-size:11.7px;color:#201f1e;transform:scaleX(0.9099);">Hämta en länk</div>
<svg style="position:absolute;left:594px;top:125px;" width="14" height="9" viewBox="0 0 14 9"><path d="M1.5 1.8l5 5 5-5" fill="none" stroke="#201f1e" stroke-width="1"/></svg>
<div class="t" style="left:626.60px;top:124px;font-size:11.7px;color:#201f1e;transform:scaleX(0.9047);">Skapa en anpassad notifiering</div>
<svg style="position:absolute;left:772px;top:125px;" width="14" height="9" viewBox="0 0 14 9"><path d="M1.5 1.8l5 5 5-5" fill="none" stroke="#201f1e" stroke-width="1"/></svg>
<div class="t" style="left:626.60px;top:145px;font-size:11.7px;color:#201f1e;transform:scaleX(0.9302);">Hantera mina notifieringar</div>
<svg style="position:absolute;left:1637px;top:198px;" width="15" height="10" viewBox="0 0 15 10"><g fill="none" stroke="#797775" stroke-width="1"><line x1="0.8" y1="5" x2="4" y2="5"/><path d="M4 1v8M4 2.2l2.5 1.8h4.8l1.5-1.6v6l-1.5-1.6H6.5L4 8.6"/></g></svg>
</body></html>
